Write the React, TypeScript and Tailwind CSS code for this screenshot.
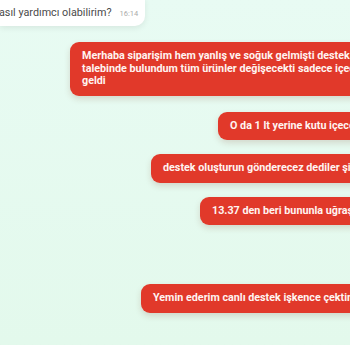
import React from "react";

const font = { fontFamily: "Roboto, 'Noto Sans', Arial, sans-serif" };

function Bubble({ ml, mt, children }: { ml: string; mt: string; children: React.ReactNode }) {
  return (
    <div className={`${ml} ${mt} shrink-0`}>
      <div className="w-[420px] rounded-[9px] bg-[#e1392a] px-[12px] py-[8px] text-[10.75px] font-bold leading-[12.5px] text-[#fff4f1] whitespace-nowrap shadow-[0_3px_6px_rgba(120,60,40,0.18)]">
        {children}
      </div>
    </div>
  );
}

export default function App() {
  return (
    <div className="w-[350px] h-[350px] overflow-hidden bg-white" style={font}>
      <div className="h-[345px] bg-gradient-to-b from-[#e8fbf3] to-[#e3f9ec] flex flex-col overflow-hidden">
        <div className="shrink-0 h-[28px] w-[145px] -mt-[2px] rounded-br-[10px] bg-white shadow-[0_2px_6px_rgba(0,0,0,0.08)] flex items-center pr-2 whitespace-nowrap">
          <span className="text-[10.8px] text-[#4a4a4a] -ml-[1px] mt-[2px]">asıl yardımcı olabilirim?</span>
          <span className="text-[7.5px] text-[#aaaaaa] ml-[8px] mt-[4px]">16:14</span>
        </div>
        <Bubble ml="ml-[70px]" mt="mt-[16px]">
          Merhaba siparişim hem yanlış ve soğuk gelmişti destek
          <br />
          talebinde bulundum tüm ürünler değişecekti sadece içecek
          <br />
          geldi
        </Bubble>
        <Bubble ml="ml-[218px]" mt="mt-[16px]">O da 1 lt yerine kutu içecek geldi</Bubble>
        <Bubble ml="ml-[151px]" mt="mt-[14px]">destek oluşturun gönderecez dediler şimdi</Bubble>
        <Bubble ml="ml-[200px]" mt="mt-[14px]">13.37 den beri bununla uğraşıyorum</Bubble>
        <Bubble ml="ml-[141px]" mt="mt-[59px]">Yemin ederim canlı destek işkence çektim</Bubble>
      </div>
    </div>
  );
}
